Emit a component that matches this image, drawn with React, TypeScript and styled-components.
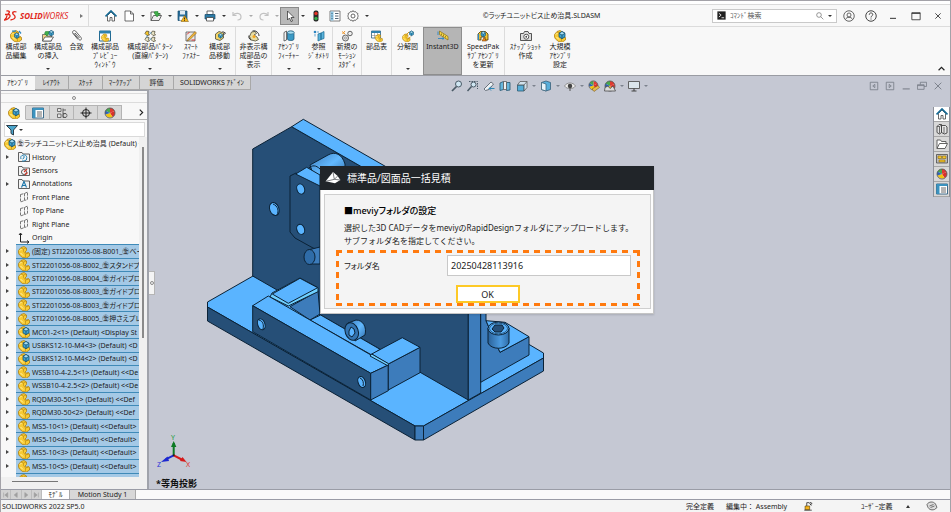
import React from 'react';
import styled, { createGlobalStyle, css } from 'styled-components';

const UI = '"Noto Sans", "Noto Sans CJK JP", sans-serif';

const GlobalStyle = createGlobalStyle`
  *, *::before, *::after { box-sizing: border-box; }
  body { margin: 0; background: #f7f7f7; font-family: ${UI}; font-size: 7px; color: #1c1c1c; overflow: hidden; }
  button, input { font: inherit; color: inherit; margin: 0; padding: 0; }
  button { border: 0; background: none; }
  ul { list-style: none; margin: 0; padding: 0; }
  h1, h2, p { margin: 0; }
`;

/* ---------- drawings ---------- */

const Glyph = styled.svg<{ $w?: number; $h?: number }>`
  display: block;
  flex: none;
  width: ${(p) => p.$w ?? 12}px;
  height: ${(p) => p.$h ?? p.$w ?? 12}px;
`;

const Part = () => (
  <>
    <path d="M1 9L6 3l6-2 5 3v5l-3 3 3 2 4-1 2 2v5l-6 4-8-1-6-5-2-4z" fill="#f8cb34" stroke="#a87708" strokeWidth="1.4" />
    <path d="M6 4l5 2v5l4 5 7-2M11 6l5-2M15 16v6" fill="none" stroke="#b98a12" strokeWidth="1.3" />
    <path d="M4 9l3-3M5 14l5 5" stroke="#fff3b0" strokeWidth="2" />
  </>
);
const Cube = ({ x = 0, y = 0, s = 1 }: { x?: number; y?: number; s?: number }) => (
  <g transform={`translate(${x} ${y}) scale(${s})`} stroke="#14506f" strokeWidth="1.3">
    <path d="M0 3l5-3 5 3v6l-5 3-5-3z" fill="#3fa3cf" />
    <path d="M0 3l5 3 5-3-5-3z" fill="#a8def2" />
    <path d="M5 6v6" />
  </g>
);
const Ball = () => (
  <>
    <circle cx="12" cy="12" r="10" fill="#f2f2f2" />
    <path d="M12 12V2a10 10 0 0 1 9 6z" fill="#e03a30" />
    <path d="M12 12L3 7a10 10 0 0 1 9-5z" fill="#49a94d" />
    <path d="M12 12l9-4a10 10 0 0 1-4 12z" fill="#d8322c" />
    <path d="M12 12l5 8a10 10 0 0 1-14-5z" fill="#f1c40f" />
    <path d="M12 12L3 15a10 10 0 0 1 0-8z" fill="#2d63b8" />
    <circle cx="12" cy="12" r="10" fill="none" stroke="#4a4a4a" strokeWidth="1.5" />
  </>
);

const ART: Record<string, React.ReactNode> = {
  home: (
    <>
      <path d="M5 11v11h5v-7h4v7h5V11l-7-7z" fill="#fff" stroke="#444" strokeWidth="1.6" />
      <path d="M1 13 12 2l11 11" fill="none" stroke="#176a94" strokeWidth="3.4" />
    </>
  ),
  doc: <path d="M4 2h11l6 6v14H4zM15 2v6h6" fill="#fff" stroke="#4a4a4a" strokeWidth="1.6" />,
  open: (
    <>
      <path d="M2 21V4h6l2 3h10v4" fill="#fff" stroke="#444" strokeWidth="1.6" />
      <path d="M2 21l5-10h16l-5 10z" fill="#eee" stroke="#444" strokeWidth="1.6" />
      <path d="M9 3h7v4h4l-6 7-5-7z" fill="#3fae49" stroke="#1f7a2a" />
    </>
  ),
  save: (
    <>
      <path d="M2 2h18v19H2z" fill="#2b6f9c" stroke="#164a6c" strokeWidth="1.4" />
      <path d="M6 2h10v7H6z" fill="#dfeaf2" />
      <path d="M5 13h10v8H5z" fill="#fff" />
      <path d="M15 11l8 12H8z" fill="#f7b719" stroke="#7a5400" />
      <path d="M15 15v4M15 20v1.6" stroke="#222" strokeWidth="1.8" />
    </>
  ),
  print: (
    <>
      <path d="M6 2h12v7H6z" fill="#fff" stroke="#444" strokeWidth="1.6" />
      <path d="M2 9h20v9H2z" fill="#2c7ba6" stroke="#164a6c" strokeWidth="1.4" />
      <path d="M5 15h14v7H5z" fill="#fff" stroke="#444" strokeWidth="1.6" />
    </>
  ),
  undo: <path d="M4 4v7h7M4 11c4-6 16-6 16 3 0 4-3 6-7 6" fill="none" stroke="#c2c2c2" strokeWidth="2.4" />,
  redo: <path d="M20 4v7h-7M20 11C16 5 4 5 4 14c0 4 3 6 7 6" fill="none" stroke="#c2c2c2" strokeWidth="2.4" />,
  cursor: <path d="M7 2v18l4-4 3 7 3-1-3-7h6z" fill="#fff" stroke="#333" strokeWidth="1.5" />,
  light: (
    <>
      <rect x="7" y="1" width="10" height="22" rx="4" fill="#2a2a2a" />
      <circle cx="12" cy="7" r="3.4" fill="#e33226" />
      <circle cx="12" cy="17" r="3.4" fill="#35b04a" />
    </>
  ),
  list: (
    <>
      <path d="M2 2h20v20H2z" fill="#fff" stroke="#555" strokeWidth="1.5" />
      <path d="M3 3h6v18H3z" fill="#8cc6e4" />
      <path d="M5 7h2M5 12h2M5 17h2M12 7h7M12 12h7M12 17h7" stroke="#3e5566" strokeWidth="1.8" />
    </>
  ),
  gear: (
    <>
      <path d="M12 1l2 3 3-1 2 3 3 1-1 3 2 2-2 2 1 3-3 1-2 3-3-1-2 3-2-3-3 1-2-3-3-1 1-3-2-2 2-2-1-3 3-1 2-3 3 1z" fill="#fff" stroke="#555" strokeWidth="1.6" />
      <circle cx="12" cy="12" r="4" fill="none" stroke="#555" strokeWidth="1.8" />
    </>
  ),
  user: (
    <g fill="none" stroke="#444" strokeWidth="1.6">
      <circle cx="12" cy="12" r="10.5" />
      <circle cx="12" cy="10" r="4" />
      <path d="M5 19c2-6 12-6 14 0" />
    </g>
  ),
  help: (
    <g fill="none" stroke="#333" strokeWidth="1.8">
      <circle cx="12" cy="12" r="10.5" />
      <path d="M8.5 9.5c0-5 7-4.5 7-.5 0 3-3.5 2.5-3.5 6M12 17v2" />
    </g>
  ),
  min: <path d="M3 19h18" stroke="#333" strokeWidth="3" />,
  max: <path d="M2 4h20v17H2zM2 6h20" fill="none" stroke="#333" strokeWidth="2" />,
  close: <path d="M4 4l16 16M20 4L4 20" stroke="#333" strokeWidth="2.6" />,
  magnify: <g fill="none" stroke="#666" strokeWidth="2"><circle cx="9" cy="9" r="7" /><path d="M14 14l8 8" /></g>,
  term: <><path d="M1 1h22v22H1z" fill="#222" /><path d="M5 6l6 5-6 5M12 18h7" fill="none" stroke="#fff" strokeWidth="2.2" /></>,
  editPart: (
    <>
      <Part />
      <Cube x={9} y={6} s={0.9} />
      <path d="M4 2h8M18 2l4 5" stroke="#2d86c2" strokeWidth="2.5" />
    </>
  ),
  insert: (
    <>
      <path d="M1 22V9h7l2 3h9v10z" fill="#f0d48a" stroke="#555" strokeWidth="1.5" />
      <path d="M1 22l5-8h17l-5 8z" fill="#fff" stroke="#444" strokeWidth="1.5" />
      <path d="M7 3h8v3l-5 6-5-5z" fill="#3fae49" stroke="#1f7a2a" />
      <Cube x={14} y={1} s={0.9} />
    </>
  ),
  clip: <path d="M5 6l11 13c2 3 7 0 4-4L9 2C6-1 1 3 4 7l10 12M8 6l9 10" fill="none" stroke="#555" strokeWidth="1.8" />,
  preview: (
    <>
      <path d="M1 2h22v20H1z" fill="#fff" stroke="#236a92" strokeWidth="2" />
      <path d="M1 2h22v5H1z" fill="#2e81ad" />
      <g transform="translate(4 7) scale(.68)"><Part /></g>
    </>
  ),
  pattern: (
    <>
      {[[1, 1], [13, 1], [1, 13], [13, 13]].map(([x, y], i) => (
        <g key={i} transform={`translate(${x} ${y})`}>
          <path d="M1 6l3-5 5 1-1 4 2 3-5 1z" fill={i === 0 ? '#f6c62c' : '#e9e3c4'} stroke="#4d4a35" strokeWidth="1.5" />
        </g>
      ))}
      <path d="M11 6h4M11 18h4M6 11v4" stroke="#2d86c2" strokeWidth="1.5" />
    </>
  ),
  smart: (
    <>
      <path d="M2 4h18v18H2z" fill="#e9e9e9" stroke="#555" strokeWidth="1.6" />
      <path d="M6 18L20 3l3 3L9 20l-5 2z" fill="#f2b53a" stroke="#6d4c10" />
      <path d="M4 9l5-5M13 20h7" stroke="#d33" strokeWidth="2" />
    </>
  ),
  move: (
    <>
      <path d="M3 8l7-5 9 3v10l-7 5-9-3z" fill="#f6d565" stroke="#4a4a3a" strokeWidth="1.6" />
      <Cube x={9} y={7} s={0.8} />
      <path d="M17 3l6 3-4 4" fill="none" stroke="#333" strokeWidth="1.8" />
    </>
  ),
  hidden: (
    <>
      <path d="M3 13l4-9 7-1 3 4-5 3 6 4 3 5-6 3-9-2z" fill="#e8dca0" stroke="#4a4a3a" strokeWidth="1.6" />
      <path d="M9 2c6-2 13 3 13 10M6 20c-4-2-5-6-4-9" fill="none" stroke="#333" strokeWidth="2" />
      <circle cx="12" cy="13" r="3" fill="#f6a71c" />
    </>
  ),
  feature: (
    <>
      <path d="M2 5l5-3v18l-5 2z" fill="#f3f3f3" stroke="#444" strokeWidth="1.5" />
      <path d="M9 5c0-4 13-4 13 0v13c0 4-13 4-13 0z" fill="#3b9ac5" stroke="#1d5676" strokeWidth="1.5" />
      <ellipse cx="15.5" cy="5" rx="6.5" ry="3" fill="#a8def2" stroke="#1d5676" />
    </>
  ),
  reference: (
    <>
      <path d="M10 8l6-2v13l-6 3zM16 6l6-3v14l-6 2z" fill="#5bb4dc" stroke="#1d6d96" strokeWidth="1.5" />
      <circle cx="4" cy="4" r="2.6" fill="#2d86c2" />
      <path d="M4 8v5M8 4h4" stroke="#2d86c2" strokeWidth="1.5" />
    </>
  ),
  motion: (
    <>
      <circle cx="9" cy="16" r="6" fill="#e4e4e4" stroke="#555" strokeWidth="1.8" />
      <circle cx="9" cy="16" r="2" fill="#fff" stroke="#555" />
      <circle cx="18" cy="7" r="4.5" fill="#eee" stroke="#555" strokeWidth="1.8" />
      <path d="M2 3l6 5M3 8l5-6" stroke="#f0962a" strokeWidth="2" />
    </>
  ),
  bom: (
    <>
      <path d="M1 2h18v14H1z" fill="#fff" stroke="#2c5f80" strokeWidth="1.6" />
      <path d="M1 2h18v4H1z" fill="#2e81ad" />
      <path d="M7 6v10M13 6v10M1 11h18" stroke="#777" />
      <g transform="translate(8 8) scale(.66)"><Part /></g>
    </>
  ),
  explode: (
    <>
      <g transform="translate(0 7) scale(.7)"><Part /></g>
      <Cube x={15} y={2} s={0.8} />
      <path d="M9 9l5-5M12 17l5-3" stroke="#c88a12" strokeWidth="1.8" />
    </>
  ),
  instant: (
    <>
      <path d="M5 2l17 11v7L5 9z" fill="#f7d74a" stroke="#8a6d0a" strokeWidth="1.4" />
      <path d="M9 7v3M13 9v4M17 12v3" stroke="#6b5408" strokeWidth="1.3" />
      <path d="M2 3v7M2 17h12M14 17l-3-2M14 17l-3 2" fill="none" stroke="#2d86c2" strokeWidth="1.8" />
    </>
  ),
  speed: (
    <>
      <path d="M2 20V8l5-5h10l5 5v12h-6v-6H8v6z" fill="#f6c62c" stroke="#4c3904" strokeWidth="1.6" />
      <Cube x={8} y={3} s={0.9} />
      <path d="M14 15l5 7h-9z" fill="#f58a1c" stroke="#5c3300" />
      <path d="M3 8v12" stroke="#2d86c2" strokeWidth="2.5" />
    </>
  ),
  camera: (
    <>
      <path d="M1 7h6l2-4h7l2 4h5v14H1z" fill="#dcdcdc" stroke="#444" strokeWidth="1.8" />
      <circle cx="12.5" cy="13.5" r="5" fill="#fff" stroke="#444" strokeWidth="1.8" />
      <circle cx="12.5" cy="13.5" r="1.8" fill="#444" />
    </>
  ),
  asm: (
    <>
      <Part />
      <Cube x={10} y={3} s={1.2} />
    </>
  ),
  part: <Part />,
  tree: <><path d="M3 3h7v6H3zM3 14h7v7H3z" fill="#e4e4e4" stroke="#555" strokeWidth="1.6" /><path d="M14 3v18h6M14 6h6M14 13h6" fill="none" stroke="#555" strokeWidth="1.8" /><circle cx="18" cy="17" r="4" fill="none" stroke="#555" strokeWidth="1.6" /></>,
  props: (
    <>
      <path d="M1 2h22v20H1z" fill="#fff" stroke="#2c5f80" strokeWidth="1.8" />
      <path d="M1 2h22v4H1zM1 6h6v16H1z" fill="#3b93bf" />
      <path d="M10 10h10M10 14h10M10 18h10" stroke="#444" strokeWidth="1.6" />
    </>
  ),
  target: <g fill="none" stroke="#222" strokeWidth="2"><circle cx="12" cy="12" r="7" /><path d="M12 1v22M1 12h22" /></g>,
  ball: <Ball />,
  funnel: <path d="M1 3h22l-8 9v10l-5-3v-7z" fill="#4aa5cc" stroke="#2c3e49" strokeWidth="2" />,
  history: <><path d="M1 21V3h7l2 3h13v15z" fill="#f3f3f3" stroke="#444" strokeWidth="1.7" /><path d="M6 16a6 6 0 1 1 6 4H8M12 10v4l-3 2" fill="none" stroke="#2583b4" strokeWidth="2" /></>,
  sensor: <><path d="M1 21V3h7l2 3h13v15z" fill="#f3f3f3" stroke="#444" strokeWidth="1.7" /><circle cx="12" cy="14" r="5" fill="#fff" stroke="#444" strokeWidth="1.8" /><path d="M12 14l6-6M14 20l5-5" stroke="#d33a2c" strokeWidth="2.5" /></>,
  note: <><path d="M1 21V3h7l2 3h13v15z" fill="#f3f3f3" stroke="#444" strokeWidth="1.7" /><path d="M7 19l5-12 5 12M9 15h6" fill="none" stroke="#1d77aa" strokeWidth="2.2" /></>,
  plane: <path d="M5 7l8-2v14l-8 3zM13 5l6-3v15l-6 2" fill="none" stroke="#555" strokeWidth="1.6" strokeDasharray="6 2" />,
  origin: <path d="M5 3v17h16M2 6l3-4 3 4M18 17l4 3-4 3" fill="none" stroke="#222" strokeWidth="2" />,
  zoomFit: <g fill="none" stroke="#4a5a66" strokeWidth="2"><circle cx="15" cy="8" r="6" fill="#cfe6f2" /><path d="M11 13l-9 9" strokeWidth="3.5" /></g>,
  zoomArea: <g fill="none" stroke="#4a5a66" strokeWidth="2"><path d="M4 3h17v15" strokeDasharray="3 2" /><circle cx="13" cy="9" r="5" fill="#cfe6f2" /><path d="M9 13l-8 9" strokeWidth="3" /></g>,
  prev: <><path d="M2 18L16 4l5 4-9 11-7 2z" fill="#eef2f5" stroke="#555f68" strokeWidth="1.7" /><path d="M23 17H12M16 13l-4 4 4 4" fill="none" stroke="#2d86b4" strokeWidth="2" /></>,
  section: <><path d="M2 6l7-3v16l-7 2zM15 5h7v15l-7 1z" fill="#67b6dc" stroke="#2b5a74" strokeWidth="1.7" /><path d="M9 3h6v16H9z" fill="#f0f0f0" stroke="#555" strokeWidth="1.5" /></>,
  orient: <><path d="M3 10h13v12H3z" fill="#56aed8" stroke="#2b5a74" strokeWidth="1.6" /><path d="M3 10l5-7h14v12l-6 7V10zM16 10l6-7" fill="#d5ebf5" fillOpacity=".7" stroke="#555" strokeWidth="1.5" /></>,
  display: <><path d="M3 5l9-3 9 3v14l-9 3-9-3z" fill="#57aeda" stroke="#3a6178" strokeWidth="1.6" /><path d="M3 5l9 3v14l-9-3z" fill="#e8f4fa" stroke="#3a6178" strokeWidth="1.5" /></>,
  eye: <><path d="M1 12C6 4 18 4 23 12 18 19 6 19 1 12z" fill="#eee" stroke="#777" strokeWidth="1.5" /><circle cx="12" cy="12" r="4.5" fill="#444" /><path d="M12 16v6" stroke="#555" strokeWidth="2" /></>,
  appearance: <><g transform="scale(.9)"><Ball /></g><path d="M8 18l12-7 3 4-11 8z" fill="#e8bb50" stroke="#6b4b0e" /></>,
  scene: <><Ball /><path d="M2 15l6-3 4 5 6-5 5 10H1z" fill="#dcdcdc" stroke="#444" strokeWidth="1.5" /></>,
  monitor: <><path d="M1 3h22v14H1z" fill="#dbe5ec" stroke="#555" strokeWidth="1.8" /><path d="M12 17v5M7 22h10" stroke="#444" strokeWidth="2.2" /></>,
  paneL: <path d="M3 3h18v18H3zM14 8l-5 4 5 4z" fill="none" stroke="#777d87" strokeWidth="2" />,
  paneR: <path d="M3 3h18v18H3zM10 8l5 4-5 4z" fill="none" stroke="#777d87" strokeWidth="2" />,
  gMin: <path d="M4 19h17" stroke="#777d87" strokeWidth="2.5" />,
  gRestore: <path d="M8 9V3h15v10h-6M1 9h16v11H1zM1 11h16" fill="none" stroke="#777d87" strokeWidth="2" />,
  gClose: <path d="M4 4l16 16M20 4L4 20" stroke="#777d87" strokeWidth="2.2" />,
  lib: <><path d="M2 7l4-4h5v16l-4 3-5-3zM11 5h8l3 3v12l-5 2-6-3z" fill="#e6e6e6" stroke="#444" strokeWidth="1.8" /><path d="M7 7v14M16 8v13M2 7h5l4-3" fill="none" stroke="#444" strokeWidth="1.5" /></>,
  folder: <path d="M2 21V4h7l2 3h9v4M2 21l5-10h16l-5 10z" fill="#fff" stroke="#555" strokeWidth="1.8" />,
  views: <><path d="M1 3h22v17H1z" fill="#bdbdbd" stroke="#444" strokeWidth="1.5" /><path d="M4 6h7v5H4zM13 6h7v5h-7zM6 14h12v4H6z" fill="#f6c62c" stroke="#795800" /></>,
  alert: <><path d="M5 12h11v9H5z" fill="#f6b31c" stroke="#5e4300" strokeWidth="1.5" /><path d="M3 22h18M9 12V4h6l5 7M17 3l5 3-5 3" fill="none" stroke="#333" strokeWidth="2" /></>,
  tag: <><path d="M2 9c3-6 13-7 17-1l3 7-5 4C10 21 4 19 2 9z" fill="#ddd" stroke="#555" strokeWidth="1.7" /><path d="M7 12l8-3M9 15l8-3" stroke="#555" strokeWidth="1.6" /></>,
  meviy: <><path d="M1 17L12 3l7 6 4 6-8 5z" fill="#fff" /><path d="M12 3l2 11-13 3M14 14l9 1M14 14l5-5" fill="none" stroke="#6a6d70" strokeWidth="1.3" /></>,
};

const Icon = ({ name, w, h }: { name: string; w?: number; h?: number }) => (
  <Glyph viewBox="0 0 24 24" $w={w} $h={h} aria-hidden="true">
    {ART[name]}
  </Glyph>
);

const Arrow = styled.span<{ $dir?: 'right' | 'up'; $tone?: string }>`
  flex: none;
  width: 0;
  height: 0;
  border: 2px solid transparent;
  ${(p) =>
    p.$dir === 'right'
      ? css`border-left: 3px solid ${p.$tone ?? '#444'}; border-right: 0;`
      : p.$dir === 'up'
      ? css`border-bottom: 3px solid ${p.$tone ?? '#333'}; border-top: 0;`
      : css`border-top: 2px solid ${p.$tone ?? '#333'}; border-bottom: 0;`}
`;

/* ---------- shell ---------- */

const Window = styled.div`
  height: 100vh;
  display: flex;
  flex-direction: column;
  border: solid #a3a2a8;
  border-width: 1px 1px 0;
  background: #f7f7f7;
  line-height: 9px;
  white-space: nowrap;
`;

const TitleBar = styled.header`
  flex: none;
  height: 26px;
  display: flex;
  align-items: stretch;
  padding-top: 4px;
  background: linear-gradient(#fff 3px, #dadada 3px, #dadada 4px, #f8f8f8 4px);
  border-bottom: 1px solid #dcdcdc;
`;

const Brand = styled.div`
  width: 88px;
  display: flex;
  align-items: center;
  gap: 2px;
  padding: 0 5px 0 3px;
  border-right: 1px solid #dcdcdc;
  color: #e1271b;
  font-size: 8px;
  font-style: italic;
`;

const BrandName = styled.span`
  margin-right: auto;
`;

const QuickTools = styled.div`
  display: flex;
  align-items: center;
  padding-left: 13px;
`;

const Tool = styled.button<{ $w: number; $active?: boolean }>`
  width: ${(p) => p.$w}px;
  height: 18px;
  display: flex;
  align-items: center;
  justify-content: center;
  ${(p) => p.$active && css`background: #b9b9b9; border: 1px solid #8a8a8a;`}
`;

const DocTitle = styled.h1`
  flex: 1;
  align-self: center;
  text-align: center;
  font-size: 7px;
  font-weight: 400;
  font-feature-settings: 'palt';
`;

const SearchBox = styled.label`
  align-self: center;
  width: 125px;
  height: 14px;
  display: flex;
  align-items: center;
  gap: 4px;
  padding: 0 4px;
  background: #fff;
  border: 1px solid #c9c9c9;
`;

const SearchInput = styled.input`
  flex: 1;
  min-width: 0;
  border: 0;
  outline: 0;
  background: none;
  color: #555;
  &::placeholder { color: #555; opacity: 1; }
`;

const Caption = styled.div`
  display: flex;
  align-items: center;
  padding: 0 2px 0 1px;
`;

/* ---------- ribbon ---------- */

const Ribbon = styled.div`
  flex: none;
  height: 49px;
  display: flex;
  background: #f8f8f8;
  border-bottom: 1px solid #9a9ca3;
`;

const Command = styled.button<{ $w: number; $sep?: boolean; $on?: boolean }>`
  width: ${(p) => p.$w}px;
  display: flex;
  flex-direction: column;
  align-items: center;
  padding: 3px 0 5px;
  border-right: ${(p) => (p.$sep ? '1px solid #dcdcdc' : '0')};
  white-space: pre;
  text-align: center;
  line-height: 9px;
  ${(p) => p.$on && css`background: #b5b5b5; border: 1px solid #8e8e8e; padding-top: 2px;`}
`;

const CommandLabel = styled.span`
  margin-bottom: auto;
`;

const RibbonFold = styled.button`
  margin: auto 5px 4px auto;
`;

type Cmd = { icon: string; text: string; w: number; drop?: boolean; sep?: boolean; on?: boolean };
const COMMANDS: Cmd[] = [
  { icon: 'editPart', text: '構成部\n品編集', w: 30 },
  { icon: 'insert', text: '構成部品\nの挿入', w: 34, drop: true },
  { icon: 'clip', text: '合致', w: 23 },
  { icon: 'preview', text: '構成部品\nﾌﾟﾚﾋﾞｭｰ\nｳｨﾝﾄﾞｳ', w: 34 },
  { icon: 'pattern', text: '構成部品ﾊﾟﾀｰﾝ\n(直線ﾊﾟﾀｰﾝ)', w: 56, drop: true },
  { icon: 'smart', text: 'ｽﾏｰﾄ\nﾌｧｽﾅｰ', w: 26 },
  { icon: 'move', text: '構成部\n品移動', w: 32, drop: true, sep: true },
  { icon: 'hidden', text: '非表示構\n成部品の\n表示', w: 36, sep: true },
  { icon: 'feature', text: 'ｱｾﾝﾌﾞﾘ\nﾌｨｰﾁｬｰ', w: 33, drop: true },
  { icon: 'reference', text: '参照\nｼﾞｵﾒﾄﾘ', w: 28, drop: true, sep: true },
  { icon: 'motion', text: '新規の\nﾓｰｼｮﾝ\nｽﾀﾃﾞｨ', w: 29, sep: true },
  { icon: 'bom', text: '部品表', w: 30, sep: true },
  { icon: 'explode', text: '分解図', w: 31, drop: true },
  { icon: 'instant', text: 'Instant3D', w: 39, on: true },
  { icon: 'speed', text: 'SpeedPak\nｻﾌﾞｱｾﾝﾌﾞﾘ\nを更新', w: 43, sep: true },
  { icon: 'camera', text: 'ｽﾅｯﾌﾟｼｮｯﾄ\n作成', w: 41 },
  { icon: 'asm', text: '大規模\nｱｾﾝﾌﾞﾘ\n設定', w: 28 },
];

/* ---------- workspace ---------- */

const Workspace = styled.main`
  position: relative;
  flex: 1;
  min-height: 0;
  display: flex;
  flex-direction: column;
  background: #c5c8d3;
`;

const CommandTabs = styled.nav`
  flex: none;
  display: flex;
  height: 14px;
`;

const CommandTab = styled.button<{ $w: number; $on?: boolean }>`
  width: ${(p) => p.$w}px;
  border: 1px solid #a8a8a8;
  border-width: 0 1px 1px 0;
  background: ${(p) => (p.$on ? '#f8f8f8' : '#d5d5d5')};
  ${(p) => p.$on && css`border-color: #f8f8f8;`}
`;

const Body = styled.div`
  position: relative;
  flex: 1;
  min-height: 0;
  display: flex;
`;

const Hud = styled.div`
  position: absolute;
  z-index: 1;
  top: 1px;
  left: 148px;
  right: 0;
  display: flex;
  justify-content: center;
  align-items: center;
  pointer-events: none;
`;

const DocButtons = styled.div`
  position: absolute;
  z-index: 1;
  top: 1px;
  right: 4px;
  display: flex;
`;

const TaskPane = styled.aside`
  position: absolute;
  z-index: 1;
  top: 31px;
  right: 0;
  width: 17px;
  display: flex;
  flex-direction: column;
  border: solid #8f9199;
  border-width: 0 1px;
`;

const TaskButton = styled.button<{ $on?: boolean }>`
  height: 15px;
  display: flex;
  align-items: center;
  justify-content: center;
  background: ${(p) => (p.$on ? '#fff' : '#d8d8d8')};
  border-bottom: 1px solid #a6a6a6;
`;

/* ---------- feature tree panel ---------- */

const Panel = styled.aside`
  flex: none;
  width: 148px;
  display: flex;
  flex-direction: column;
  background: #f8f8f8;
  border: solid #a0a3ab;
  border-width: 1px 2px 0 0;
`;

const Grip = styled.div`
  height: 10px;
  margin-top: 2px;
  display: flex;
  align-items: center;
  justify-content: center;
  border: solid #dcdcdc;
  border-width: 1px 0;
`;

const Dot = styled.span`
  width: 4px;
  height: 4px;
  border: 1px solid #8a8a8a;
  border-radius: 50%;
`;

const PanelTabs = styled.div`
  display: flex;
  margin-top: 2px;
  padding-left: 1px;
`;

const PanelTab = styled.button<{ $on?: boolean }>`
  width: 24px;
  height: 15px;
  display: flex;
  align-items: center;
  justify-content: center;
  border: 1px solid #b4b4b4;
  border-left-width: 0;
  background: ${(p) => (p.$on ? '#f8f8f8' : '#d8d8d8')};
  ${(p) => p.$on && css`border-color: #f8f8f8 #b4b4b4 #f8f8f8;`}
`;

const MoreTabs = styled.button`
  flex: 1;
  display: flex;
  align-items: center;
  justify-content: flex-end;
  padding-right: 3px;
  border-bottom: 1px solid #b4b4b4;
`;

const Filter = styled.button`
  height: 15px;
  margin: 2px 2px 0 3px;
  padding-left: 1px;
  display: flex;
  align-items: center;
  gap: 1px;
  background: #fff;
  border: 1px solid #dadada;
`;

const TreeArea = styled.div`
  flex: 1;
  min-height: 0;
  display: flex;
`;

const TreeList = styled.ul`
  flex: 1;
  min-width: 0;
  display: flex;
  flex-direction: column;
  font-feature-settings: 'palt';
`;

const Row = styled.li<{ $cut?: boolean; $root?: boolean }>`
  flex: ${(p) => (p.$cut ? '1 1 0' : '3 1 0')};
  min-height: 0;
  display: flex;
  align-items: ${(p) => (p.$cut ? 'flex-start' : 'center')};
  overflow: hidden;
  padding-left: ${(p) => (p.$root ? 3 : 0)}px;
`;

const Twisty = styled.span`
  flex: none;
  width: 15px;
  display: flex;
  justify-content: center;
  padding-right: 2px;
`;

const RowBody = styled.span<{ $sel?: boolean; $tight?: boolean }>`
  flex: 1;
  min-width: 0;
  align-self: stretch;
  display: flex;
  align-items: inherit;
  gap: ${(p) => (p.$tight ? 1 : 2)}px;
  padding-left: ${(p) => (p.$tight ? 0 : 2)}px;
  overflow: hidden;
  ${(p) => p.$sel && css`background: #a4c9e6; border-top: 1px solid #3f8ab8;`}
`;

const ScrollLane = styled.div`
  flex: none;
  width: 8px;
  background: #f0f0f0;
  display: flex;
  justify-content: center;
  padding-top: 10px;
`;

const VThumb = styled.span`
  width: 2px;
  height: 58%;
  background: #8a8a8a;
`;

const HLane = styled.div`
  flex: none;
  height: 12px;
  padding: 4px 0 0 11px;
  background: #f0f0f0;
`;

const HThumb = styled.span`
  display: block;
  width: 46px;
  height: 1px;
  background: #777;
`;

type Node = { icon: string; text: string; open?: boolean; sel?: boolean };
const NODES: Node[] = [
  { icon: 'history', text: 'History', open: true },
  { icon: 'sensor', text: 'Sensors' },
  { icon: 'note', text: 'Annotations', open: true },
  { icon: 'plane', text: 'Front Plane' },
  { icon: 'plane', text: 'Top Plane' },
  { icon: 'plane', text: 'Right Plane' },
  { icon: 'origin', text: 'Origin' },
  ...(
    [
      ['part', '(固定) STI2201056-08-B001_㊎ベー'],
      ['part', 'STI2201056-08-B002_㊎スタンドプレ'],
      ['part', 'STI2201056-08-B004_㊎ガイドブロッ'],
      ['part', 'STI2201056-08-B003_㊎ガイドブロッ'],
      ['part', 'STI2201056-08-B003_㊎ガイドブロッ'],
      ['part', 'STI2201056-08-B005_㊎押さえプレー'],
      ['asm', 'MC01-2<1> (Default) <Display St'],
      ['asm', 'USBKS12-10-M4<3> (Default) <D'],
      ['asm', 'USBKS12-10-M4<2> (Default) <D'],
      ['part', 'WSSB10-4-2.5<1> (Default) <<De'],
      ['part', 'WSSB10-4-2.5<2> (Default) <<De'],
      ['part', 'RQDM30-50<1> (Default) <<Def'],
      ['part', 'RQDM30-50<2> (Default) <<Def'],
      ['part', 'MS5-10<1> (Default) <<Default>'],
      ['part', 'MS5-10<4> (Default) <<Default>'],
      ['part', 'MS5-10<3> (Default) <<Default>'],
      ['part', 'MS5-10<5> (Default) <<Default>'],
    ] as [string, string][]
  ).map(([icon, text]) => ({ icon, text, open: true, sel: true })),
];

/* ---------- 3D view ---------- */

const Viewport = styled.section`
  position: relative;
  flex: 1;
  min-width: 0;
  overflow: hidden;
`;

const Scene = styled.svg`
  position: absolute;
  top: 0;
  left: 0;
  width: 802px;
  height: 400px;
`;

const PanelHandle = styled.button`
  position: absolute;
  top: 181px;
  left: 0;
  width: 6px;
  height: 24px;
  display: flex;
  align-items: center;
  justify-content: center;
  background: #f4f4f4;
  border: 1px solid #b5b5b5;
  border-left: 0;
`;

const ViewName = styled.div`
  position: absolute;
  left: 7px;
  bottom: 0;
  font-size: 9px;
  line-height: 10px;
  font-weight: 700;
  color: #111;
`;

const D = '#264f77';
const M = '#3d7cbb';
const L = '#5ab4ff';

const Model = () => (
  <Scene viewBox="149 90 802 400" aria-label="アセンブリ">
    <defs>
      <linearGradient id="cyl" x1="0" y1="0" x2="1" y2="1">
        <stop offset="0" stopColor="#3d7cbb" />
        <stop offset=".5" stopColor="#62b9ff" />
        <stop offset="1" stopColor="#2f6aa5" />
      </linearGradient>
      <linearGradient id="bolt" x1="0" x2="1">
        <stop offset="0" stopColor="#2b6299" />
        <stop offset=".6" stopColor="#4c9be0" />
        <stop offset="1" stopColor="#2f6da8" />
      </linearGradient>
    </defs>
    <g stroke="#0b2236" strokeWidth="1" strokeLinejoin="round">
      <path d="M207.500 302L253 276l215 40 62 29 13.500 8v5L423.500 426H415L207.500 307z" fill={L} />
      <path d="M207.500 307L415 426v14L207.500 321z" fill={D} />
      <path d="M415 426h8.500v14H415z" fill={M} />
      <path d="M423.500 426l120-68v13l-120 69z" fill={M} />
      <path d="M252.700 149l39-22.300L468.300 228v172L252.700 276z" fill={D} />
      <path d="M291.700 126.700l11.600-7.400L480.700 221v10l-12.400-3z" fill={L} />
      <path d="M468.300 228h12.400v165l-12.400 7z" fill={M} />
      <path d="M480.700 300h5.300v20.700l14 31.600 29-15.600V355l-48.300 27.300z" fill={M} />
      <path d="M486 320.700l19 1.600 24 14.400-29 15.600z" fill={L} />
      <path d="M488 328v15c3 7 18 7 21 0v-15z" fill="url(#bolt)" />
      <ellipse cx="498.500" cy="328.500" rx="10.500" ry="6.500" fill={L} />
      <ellipse cx="498.500" cy="328.500" rx="9" ry="5.300" fill="none" strokeWidth=".6" />
      <path d="M492 329l3-4h7l2 3-3 4h-6z" fill={D} />

      <path d="M310 165l18-10c7-4 14-1 17 9v16h-30z" fill="url(#cyl)" />
      <path d="M309 168c3-3 7-3 11 1" fill="none" />
      <path d="M290 176l6-3 24 12v65l-7-2-18-10-5-6z" fill={D} />
      <path d="M295.700 174l11-6.700L320 175v11z" fill={L} />
      <ellipse cx="300.700" cy="189" rx="3.800" ry="5.200" fill={L} transform="rotate(-20 300.700 189)" />
      <ellipse cx="300.700" cy="229.300" rx="3.800" ry="5.200" fill={L} transform="rotate(-20 300.700 229.300)" />
      <ellipse cx="274.300" cy="209" rx="4.600" ry="6.600" fill={L} transform="rotate(-20 274.300 209)" />
      <path d="M273 204c5 2 6 7 4 11" fill="none" />
      <path d="M308 250l12-3v17l-10 0z" fill={M} />
      <ellipse cx="309.500" cy="257" rx="5.500" ry="7.500" fill="#2f6ca8" />

      <path d="M310 320l10.700-5L380 349.300l-8.300 5.700z" fill={L} />
      <path d="M290 306.700l28-15.700 2 23-10 6z" fill={M} />
      <path d="M270 297l2-4 28-15 18 9.700v4L288.300 306z" fill="#6fd0ff" />
      <path d="M272.300 294L300 278.300l17.700 9.400-29.400 15.600z" fill={L} />
      <path d="M252.700 305.700L268.300 296l120 69-17.600 8.300z" fill={L} />
      <path d="M252.700 305.700l118 67.600V400l-118-68.300z" fill={D} />
      <path d="M370.700 373.300l17.600-8.300v25.700L370.700 400z" fill={M} />
      <path d="M388.300 364l31.700-16.700v25.400L388.300 390z" fill={M} />
      <path d="M371.700 354l30.600-16.300 17.700 9.600L388.300 364z" fill={L} />
      <path d="M371.700 354l16.600 9.500v2.500l-18.300-10z" fill="#6fd0ff" />
      <ellipse cx="261.300" cy="324.300" rx="3.600" ry="5.600" fill={L} transform="rotate(-20 261.300 324.300)" />
      <path d="M259 320c4 1 5 5 4 9" fill="none" />
      <ellipse cx="361.700" cy="382" rx="3.600" ry="5.600" fill={L} transform="rotate(-20 361.700 382)" />
      <path d="M360 378c3 1 4 5 3 8" fill="none" />
      <path d="M348 323l8-3c7 0 11 7 9 15l-10 6z" fill="url(#cyl)" />
      <ellipse cx="351.700" cy="331.500" rx="6.500" ry="9" fill="#3474b0" transform="rotate(-20 351.700 331.500)" />
      <path d="M349 331l2-4 3 2 1 4-3 4-3-2z" fill={L} />
    </g>
    <g strokeWidth="2">
      <path d="M173.700 455.300V443" stroke="#0d7a24" />
      <path d="M171 447l2.700-6 2.700 6z" fill="#0d7a24" />
      <path d="M173.700 455.300l9 4.700" stroke="#d61a1a" />
      <path d="M180 461l6.500 1-4-5z" fill="#d61a1a" />
      <path d="M173.700 455.300l-8 4" stroke="#1c28d0" />
      <path d="M167.500 456.500l-6.500 5.500 8-1z" fill="#1c28d0" />
      <circle cx="173.700" cy="455.300" r="1" fill="#222" />
    </g>
    <g fontFamily="Noto Sans" fontSize="7">
      <text x="171" y="440" fill="#1c9c3a">Y</text>
      <text x="186" y="467" fill="#e02a2a">X</text>
      <text x="157" y="467" fill="#2a35d8">Z</text>
    </g>
  </Scene>
);

/* ---------- dialog ---------- */

const Dialog = styled.section`
  position: absolute;
  z-index: 2;
  top: 90px;
  left: 319px;
  width: 334px;
  padding-bottom: 4px;
  background: #fdfdfd;
  border: 1px solid #c4c4c4;
  border-top: 0;
  box-shadow: 0 1px 2px rgba(0, 0, 0, 0.15);
  color: #222;
`;

const DialogTitle = styled.h2`
  height: 24px;
  display: flex;
  align-items: center;
  gap: 6px;
  margin: 0 -1px;
  padding-left: 5px;
  background: #212529;
  color: #fff;
  font-size: 10px;
  line-height: 14px;
  font-weight: 400;
  font-feature-settings: 'palt';
`;

const DialogBox = styled.form`
  margin: 4px 2px 0 3px;
  padding: 9px 10px 2px 11px;
  background: #f4f4f4;
  border: 1px solid #cfcfcf;
`;

const Lead = styled.p`
  padding-left: 8px;
  font-size: 9px;
  line-height: 13px;
  font-weight: 500;
  color: #000;
  font-feature-settings: 'palt';
  margin-bottom: 4px;
`;

const Copy = styled.p`
  padding-left: 8px;
  font-size: 8px;
  line-height: 13px;
`;

const dash = '#ff7a0f 0 6px, transparent 6px 11px';
const Highlight = styled.div`
  height: 56px;
  margin-top: 3px;
  padding: 5px 9px 4px 8px;
  display: grid;
  grid-template-columns: 103px 1fr;
  grid-template-rows: 21px 18px;
  row-gap: 9px;
  align-items: center;
  background:
    repeating-linear-gradient(90deg, ${dash}) top / 100% 3px no-repeat,
    repeating-linear-gradient(90deg, ${dash}) bottom / 100% 3px no-repeat,
    repeating-linear-gradient(180deg, ${dash}) left / 3px 100% no-repeat,
    repeating-linear-gradient(180deg, ${dash}) right / 3px 100% no-repeat;
`;

const FieldLabel = styled.label`
  font-size: 8px;
  font-feature-settings: 'palt';
`;

const FolderInput = styled.input`
  width: 100%;
  height: 21px;
  padding: 0 3px;
  font-size: 9px;
  background: #fff;
  border: 1px solid #c8c8c8;
`;

const OkButton = styled.button`
  grid-column: 1 / -1;
  justify-self: center;
  width: 64px;
  height: 18px;
  background: #fff;
  border: 2px solid #fdc926;
  font-size: 9px;
`;

/* ---------- bottom ---------- */

const SheetBar = styled.nav`
  flex: none;
  height: 11px;
  display: flex;
  border: solid #9a9ca6;
  border-width: 1px 0;
  background: #fafafa;
`;

const SheetNav = styled.div`
  width: 41px;
  display: flex;
  background: #d2d2d2;
`;

const NavButton = styled.button`
  flex: 1;
  display: flex;
  align-items: center;
  justify-content: center;
  border-right: 1px solid #bdbdbd;
`;

const SheetTab = styled.button<{ $w: number; $on?: boolean }>`
  width: ${(p) => p.$w}px;
  line-height: 8px;
  background: ${(p) => (p.$on ? '#fff' : '#d8d8d8')};
  border-right: 1px solid #aaa;
`;

const StatusBar = styled.footer`
  flex: none;
  height: 12px;
  display: flex;
  align-items: center;
  padding: 0 2px 0 1px;
  background: #f4f4f4;
`;

const Status = styled.span<{ $w?: number; $push?: boolean }>`
  ${(p) => p.$w && css`width: ${p.$w}px;`}
  ${(p) => p.$push && css`margin-left: auto;`}
  flex: none;
`;

const quick: [string, number, boolean][] = [
  ['home', 17, false], ['doc', 20, true], ['open', 20, true], ['save', 20, true],
  ['print', 20, true], ['undo', 20, true], ['redo', 19, true],
];

export default function App() {
  return (
    <>
      <GlobalStyle />
      <Window>
        <TitleBar>
          <Brand>
            <Glyph viewBox="0 0 28 24" $w={14} $h={12} aria-hidden="true">
              <path d="M5 2c6-1 8 2 3 6M2 9h7c6 0 3 10-8 11 3-3 5-7 5-9M25 4c-6-2-10 1-6 5 5 4 5 9-6 11" fill="none" stroke="#e1271b" strokeWidth="2.6" />
            </Glyph>
            <BrandName><b>SOLID</b>WORKS</BrandName>
            <Arrow $dir="right" $tone="#777" />
          </Brand>
          <QuickTools>
            {quick.map(([n, w, drop]) => (
              <React.Fragment key={n}>
                <Tool $w={w} aria-label={n}><Icon name={n} /></Tool>
                {drop && <Tool $w={7} aria-label={`${n} menu`}><Arrow $tone={n === 'undo' || n === 'redo' ? '#aaa' : '#333'} /></Tool>}
              </React.Fragment>
            ))}
            <Tool $w={19} $active aria-label="select"><Icon name="cursor" /></Tool>
            <Tool $w={7} aria-label="select menu"><Arrow /></Tool>
            <Tool $w={20} aria-label="rebuild"><Icon name="light" /></Tool>
            <Tool $w={18} aria-label="properties"><Icon name="list" /></Tool>
            <Tool $w={18} aria-label="options"><Icon name="gear" /></Tool>
            <Tool $w={9} aria-label="options menu"><Arrow /></Tool>
          </QuickTools>
          <DocTitle>©ラッチユニットビス止め治具.SLDASM</DocTitle>
          <SearchBox>
            <Icon name="term" w={9} />
            <SearchInput aria-label="ｺﾏﾝﾄﾞ検索" placeholder="ｺﾏﾝﾄﾞ検索" />
            <Icon name="magnify" w={8} />
            <Arrow />
          </SearchBox>
          <Caption>
            <Tool $w={22} aria-label="user"><Icon name="user" /></Tool>
            <Tool $w={22} aria-label="help"><Icon name="help" /></Tool>
            <Tool $w={22} aria-label="minimize"><Icon name="min" w={8} /></Tool>
            <Tool $w={23} aria-label="maximize"><Icon name="max" w={10} /></Tool>
            <Tool $w={21} aria-label="close"><Icon name="close" w={8} /></Tool>
          </Caption>
        </TitleBar>

        <Ribbon>
          {COMMANDS.map((c) => (
            <Command key={c.text} $w={c.w} $sep={c.sep} $on={c.on}>
              <Icon name={c.icon} />
              <CommandLabel>{c.text}</CommandLabel>
              {c.drop && <Arrow />}
            </Command>
          ))}
          <RibbonFold aria-label="collapse">
            <Glyph viewBox="0 0 12 8" $w={7} $h={5}><path d="M1 7l5-5 5 5" fill="none" stroke="#222" strokeWidth="2" /></Glyph>
          </RibbonFold>
        </Ribbon>

        <Workspace>
          <CommandTabs>
            <CommandTab $w={34} $on>ｱｾﾝﾌﾞﾘ</CommandTab>
            <CommandTab $w={34}>ﾚｲｱｳﾄ</CommandTab>
            <CommandTab $w={34}>ｽｹｯﾁ</CommandTab>
            <CommandTab $w={37}>ﾏｰｸｱｯﾌﾟ</CommandTab>
            <CommandTab $w={34}>評価</CommandTab>
            <CommandTab $w={77}>SOLIDWORKS ｱﾄﾞｲﾝ</CommandTab>
          </CommandTabs>

          <Hud>
            {([
              ['zoomFit', 16], ['zoomArea', 16], ['prev', 16], ['section', 16],
              ['orient', 17, 1], ['display', 16, 1], ['eye', 16, 1], ['appearance', 16],
              ['scene', 16, 1], ['monitor', 16, 1],
            ] as [string, number, number?][]).map(([n, w, d]) => (
              <React.Fragment key={n}>
                <Tool $w={w} aria-label={n}><Icon name={n} /></Tool>
                {d && <Tool $w={8} aria-label={`${n} menu`}><Arrow $tone="#7c828d" /></Tool>}
              </React.Fragment>
            ))}
          </Hud>
          <DocButtons>
            {['paneL', 'paneR', 'gMin', 'gRestore', 'gClose'].map((n) => (
              <Tool key={n} $w={16} aria-label={n}><Icon name={n} w={10} /></Tool>
            ))}
          </DocButtons>
          <TaskPane>
            {['home', 'lib', 'folder', 'views', 'ball', 'props'].map((n, i) => (
              <TaskButton key={n} $on={i === 0} aria-label={n}><Icon name={n} /></TaskButton>
            ))}
          </TaskPane>

          <Body>
            <Panel>
              <Grip><Dot /></Grip>
              <PanelTabs>
                {['asm', 'props', 'tree', 'target', 'ball'].map((n, i) => (
                  <PanelTab key={n} $on={i === 0} aria-label={n}><Icon name={n} /></PanelTab>
                ))}
                <MoreTabs aria-label="more">
                  <Glyph viewBox="0 0 8 12" $w={5} $h={7}><path d="M1 1l5 5-5 5" fill="none" stroke="#222" strokeWidth="2" /></Glyph>
                </MoreTabs>
              </PanelTabs>
              <Filter aria-label="filter"><Icon name="funnel" /><Arrow /></Filter>
              <TreeArea>
                <TreeList>
                  <Row $root>
                    <RowBody $tight><Icon name="asm" />㊎ラッチユニットビス止め治具 (Default) &lt;</RowBody>
                  </Row>
                  {NODES.map((n, i) => (
                    <Row key={i}>
                      <Twisty>{n.open && <Arrow $dir="right" />}</Twisty>
                      <RowBody $sel={n.sel}><Icon name={n.icon} />{n.text}</RowBody>
                    </Row>
                  ))}
                  <Row $cut>
                    <Twisty />
                    <RowBody $sel><Icon name="part" /></RowBody>
                  </Row>
                </TreeList>
                <ScrollLane><VThumb /></ScrollLane>
              </TreeArea>
              <HLane><HThumb /></HLane>
            </Panel>
            <Viewport>
              <Model />
              <PanelHandle aria-label="collapse panel"><Dot /></PanelHandle>
              <ViewName>*等角投影</ViewName>
            </Viewport>
          </Body>

          <Dialog role="dialog" aria-labelledby="dlg">
            <DialogTitle id="dlg"><Icon name="meviy" w={16} />標準品/図面品一括見積</DialogTitle>
            <DialogBox onSubmit={(e) => e.preventDefault()}>
              <Lead>■meviyフォルダの設定</Lead>
              <Copy>選択した3D CADデータをmeviyのRapidDesignフォルダにアップロードします。</Copy>
              <Copy>サブフォルダ名を指定してください。</Copy>
              <Highlight>
                <FieldLabel htmlFor="folder">フォルダ名</FieldLabel>
                <FolderInput id="folder" defaultValue="20250428113916" />
                <OkButton type="submit">OK</OkButton>
              </Highlight>
            </DialogBox>
          </Dialog>
        </Workspace>

        <SheetBar>
          <SheetNav>
            {['M8 1L3 5l5 4zM1 1v8', 'M7 1L2 5l5 4z', 'M3 1l5 4-5 4z', 'M2 1l5 4-5 4zM9 1v8'].map((d) => (
              <NavButton key={d} aria-label="scroll tabs"><Glyph viewBox="0 0 10 10" $w={6}><path d={d} fill="#a0a0a0" stroke="#a0a0a0" /></Glyph></NavButton>
            ))}
          </SheetNav>
          <SheetTab $w={28} $on>ﾓﾃﾞﾙ</SheetTab>
          <SheetTab $w={66}>Motion Study 1</SheetTab>
        </SheetBar>
        <StatusBar>
          <Status>SOLIDWORKS 2022 SP5.0</Status>
          <Status $push $w={40}>完全定義</Status>
          <Status $w={77}>編集中： Assembly</Status>
          <Status $w={58}><Icon name="alert" w={10} /></Status>
          <Status $w={45}>ﾕｰｻﾞｰ定義</Status>
          <Arrow $dir="up" />
          <Status $w={38}><Glyph viewBox="-32 0 76 24" $w={38} $h={12}>{ART.tag}</Glyph></Status>
        </StatusBar>
      </Window>
    </>
  );
}
